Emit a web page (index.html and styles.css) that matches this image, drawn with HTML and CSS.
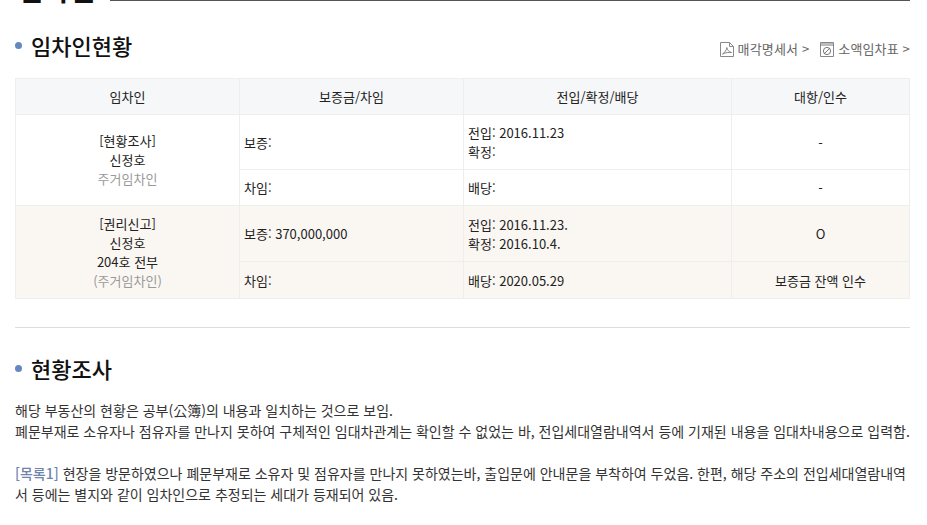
FILE: index.html
```html
<!DOCTYPE html>
<html lang="ko">
<head>
<meta charset="utf-8">
<title>임차인현황</title>
<link rel="stylesheet" href="styles.css">
</head>
<body>
<div class="page">
  <div class="top-title"><h2>임차인</h2><span class="top-line"></span></div>
  <div class="sec-head">
    <h3 class="sec-title"><span class="dot"></span>임차인현황</h3>
    <div class="links">
      <a class="link"><svg class="ico" width="14" height="15" viewBox="0 0 14 15"><path d="M.5.5H9.5L13.5 4.5V14.5H.5Z" fill="none" stroke="#888"/><path d="M9.5.5V4.5H13.5" fill="none" stroke="#888"/><path d="M2.5 12C5 10.5 6.5 8 6.8 5.5C7.3 8 9 10 11.5 10.5C9 10.3 5.5 10.5 2.5 12Z" fill="none" stroke="#777" stroke-width=".9"/></svg>매각명세서 &gt;</a>
      <a class="link"><svg class="ico" width="14" height="15" viewBox="0 0 14 15"><path d="M.5.5H13.5V14.5H.5Z" fill="none" stroke="#888"/><path d="M1 1H13V4H1Z" fill="#bbb"/><circle cx="7" cy="9" r="3.6" fill="none" stroke="#777"/><path d="M4 12L10 6" stroke="#777"/></svg>소액임차표 &gt;</a>
    </div>
  </div>
  <table class="tbl">
    <colgroup><col class="c1"><col class="c2"><col class="c3"><col class="c4"></colgroup>
    <thead>
      <tr class="r-h"><th>임차인</th><th>보증금/차임</th><th>전입/확정/배당</th><th>대항/인수</th></tr>
    </thead>
    <tbody>
      <tr class="r-a">
        <td class="ctr up" rowspan="2">[현황조사]<br>신정호<br><span class="mute">주거임차인</span></td>
        <td>보증:</td>
        <td>전입: 2016.11.23<br>확정:</td>
        <td class="ctr">-</td>
      </tr>
      <tr class="r-b"><td>차임:</td><td>배당:</td><td class="ctr">-</td></tr>
      <tr class="r-c tint">
        <td class="ctr" rowspan="2">[권리신고]<br>신정호<br>204호 전부<br><span class="mute">(주거임차인)</span></td>
        <td>보증: 370,000,000</td>
        <td>전입: 2016.11.23.<br>확정: 2016.10.4.</td>
        <td class="ctr">O</td>
      </tr>
      <tr class="r-d tint"><td>차임:</td><td>배당: 2020.05.29</td><td class="ctr">보증금 잔액 인수</td></tr>
    </tbody>
  </table>
  <hr class="rule">
  <h3 class="sec-title survey"><span class="dot"></span>현황조사</h3>
  <div class="body-text">
    <p>해당 부동산의 현황은 공부(公簿)의 내용과 일치하는 것으로 보임.<br>폐문부재로 소유자나 점유자를 만나지 못하여 구체적인 임대차관계는 확인할 수 없었는 바, 전입세대열람내역서 등에 기재된 내용을 임대차내용으로 입력함.</p>
    <p><span class="tag">[목록1]</span> 현장을 방문하였으나 폐문부재로 소유자 및 점유자를 만나지 못하였는바, 출입문에 안내문을 부착하여 두었음. 한편, 해당 주소의 전입세대열람내역서 등에는 별지와 같이 임차인으로 추정되는 세대가 등재되어 있음.</p>
  </div>
</div>
</body>
</html>
```
FILE: styles.css
```css
* { box-sizing: border-box; }
html, body { margin: 0; height: 100%; overflow: hidden; background: #fff; }
body { font-family: "Noto Sans CJK KR", "Noto Sans", sans-serif; font-size: 13px; color: #333; }
.page { width: 895px; margin: 0 0 0 15px; }
.top-title { display: flex; align-items: flex-start; height: 6px; overflow: hidden; gap: 15px; }
.top-title h2 { margin: -26px 0 0 3px; font-size: 28px; line-height: 30px; font-weight: 700; color: #111; white-space: nowrap; }
.top-line { flex: 1; height: 1px; background: #555; }
.sec-head { display: flex; justify-content: space-between; align-items: center; height: 72px; padding-top: 6px; }
.sec-title { margin: 0; display: flex; align-items: center; font-size: 22px; line-height: 30px; font-weight: 500; color: #111; }
.dot { width: 7px; height: 7px; border-radius: 50%; background: #6488c0; margin-right: 9px; }
.links { display: flex; gap: 11px; margin-top: 8px; color: #666; line-height: 18px; letter-spacing: .15px; }
.link { display: flex; align-items: center; gap: 4px; }
.ico { display: block; }
.tbl { width: 894px; border-collapse: collapse; table-layout: fixed; }
.c1, .c2 { width: 224px; }
.c3 { width: 268px; }
.c4 { width: 178px; }
.tbl th, .tbl td { border: 1px solid #eee; padding: 0 4px; line-height: 19px; font-weight: 400; color: #222; }
.tbl th { background: #f6f7f9; text-align: center; }
.r-h { height: 36px; }
.r-a { height: 55px; }
.r-b { height: 36px; }
.r-c { height: 56px; }
.r-d { height: 37px; }
.tint td { background: #faf7f3; }
.tbl .ctr { text-align: center; }
.tbl .up { padding-bottom: 2px; }
.tbl .mute { color: #999; }
.rule { margin: 28px 0 0; border: 0; border-top: 1px solid #ddd; }
.survey { margin-top: 25px; }
.body-text { margin-top: 17px; font-size: 14px; line-height: 21px; color: #333; }
.body-text p { margin: 0 0 21px; }
.tag { color: #6f83ab; font-weight: 500; }
```
